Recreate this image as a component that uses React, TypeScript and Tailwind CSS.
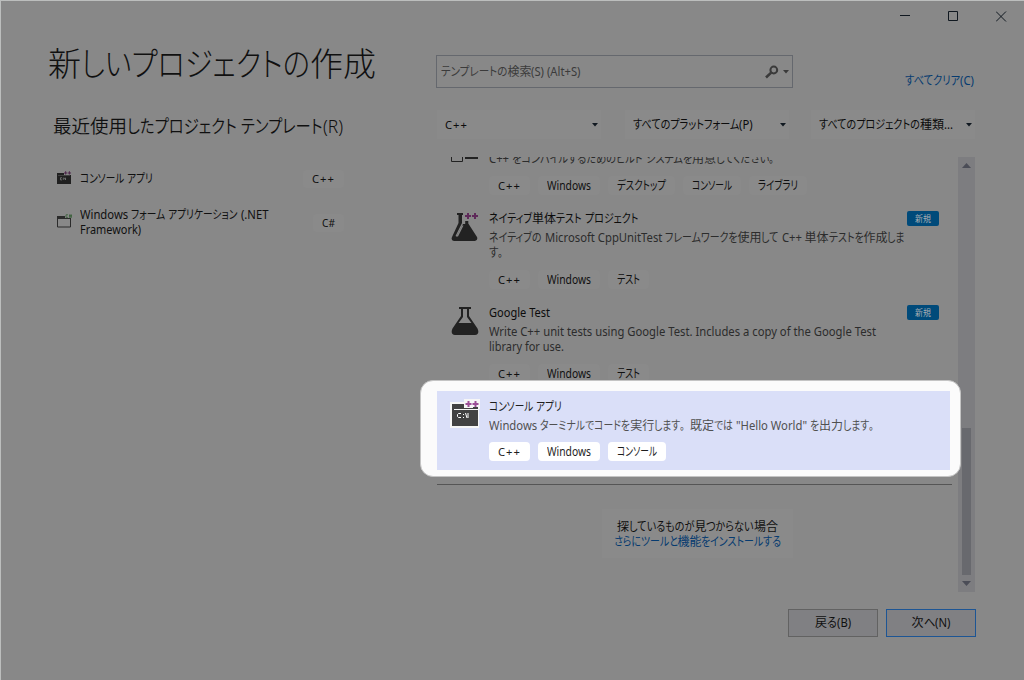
import React, { useLayoutEffect, useRef } from 'react';

const LATIN = 0.94;

type Kind = 'kana' | 'latin' | 'kanji' | 'stop';

const kindOf = (s: string): Kind =>
  s[0] === '。' ? 'stop' : /[\u3003-\u30ff]/.test(s[0]) ? 'kana' : /[\u0020-\u007e]/.test(s[0]) ? 'latin' : 'kanji';

/** One line of text: kana runs are condensed so that the line is `w` pixels wide. */
function Line({ t, w, className = '' }: { t: string; w: number; className?: string }) {
  const ref = useRef<HTMLSpanElement>(null);
  const runs = t.match(/。|[\u3003-\u30ff]+|[\u0020-\u007e]+|[\u3400-\u9fff]+/g) ?? [];
  const hasKana = runs.some((r) => kindOf(r) === 'kana');

  useLayoutEffect(() => {
    const outers = Array.from(ref.current!.children) as HTMLElement[];
    const inners = outers.map((o) => o.firstElementChild as HTMLElement);
    outers.forEach((o) => (o.style.width = 'auto'));
    inners.forEach((i) => (i.style.transform = 'none'));
    const widths = inners.map((i) => i.getBoundingClientRect().width);
    const fixedScale = (k: Kind) => (k === 'latin' ? LATIN : k === 'stop' ? 0.8 : 1);
    let fixed = 0;
    let flexible = 0;
    runs.forEach((r, i) => {
      const k = kindOf(r);
      if (!hasKana || k === 'kana') flexible += widths[i];
      else fixed += widths[i] * fixedScale(k);
    });
    const f = (w - fixed) / flexible;
    runs.forEach((r, i) => {
      const k = kindOf(r);
      const s = !hasKana || k === 'kana' ? f : fixedScale(k);
      outers[i].style.width = `${widths[i] * s}px`;
      inners[i].style.transform = `scaleX(${s})`;
    });
  }, [t, w]);

  return (
    <span ref={ref} className={`block shrink-0 whitespace-pre ${className}`} style={{ width: w }}>
      {runs.map((r, i) => (
        <span key={i} className="inline-block whitespace-pre align-baseline">
          <span className={`inline-block origin-left whitespace-pre ${kindOf(r) === 'stop' ? '[font-feature-settings:normal]' : ''}`}>{r}</span>
        </span>
      ))}
    </span>
  );
}

type Tag = [string, number];

const tagFont = (t: string) => (t === 'C++' ? 'text-[11px] tracking-[1px]' : '');

function Tags({ items, bright = false }: { items: Tag[]; bright?: boolean }) {
  return (
    <div className="flex gap-2">
      {items.map(([t, w]) => (
        <span key={t} className={`flex h-[19px] items-center rounded-[4px] px-[9px] ${bright ? 'bg-white text-[#1e1e1e]' : 'bg-[#8a8a8a] text-[#101010]'}`}>
          <Line t={t} w={w} className={`leading-[19px] ${tagFont(t)}`} />
        </span>
      ))}
    </div>
  );
}

function Caret({ className }: { className: string }) {
  return (
    <svg width="6" height="4" viewBox="0 0 6 4" className={`shrink-0 ${className}`}>
      <path d="M0 0h6L3 3.5z" fill="currentColor" />
    </svg>
  );
}

function Combo({ t, w }: { t: string; w: number }) {
  return (
    <div className="flex h-[29px] w-[164px] items-center justify-between bg-[#8a8a8a] pr-[3px] pl-[8px] text-[#0c0c0c]">
      <Line t={t} w={w} className={`leading-[29px] ${tagFont(t)}`} />
      <Caret className="text-[#101820]" />
    </div>
  );
}

const PLUSES = 'M2 0h2v2h2v2h-2v2h-2v-2h-2v-2h2zM9 0h2v2h2v2h-2v2h-2v-2h-2v-2h2z';

function ConsoleIcon() {
  return (
    <svg width="30" height="29" viewBox="0 0 30 29" className="shrink-0">
      <path d="M0 3h14V0h16v10h-1v19H0z" fill="#f6f6f6" />
      <path d="M2 5h12v3h14v19H2z" fill="#424242" />
      <path d="M4 10h24v1H4z" fill="#f6f6f6" />
      <path d="M14 8h9v1h-9z" fill="#f6f6f6" />
      <path d="M11 14.5H8.5l-1 1v2l1 1H11M13.5 15v1M13.5 18v1M15.500 14l1.500 5M18 14v5" fill="none" stroke="#fff" strokeWidth="1" />
      <path d={PLUSES} transform="translate(15.5 2)" fill="#9b4f96" />
    </svg>
  );
}

function SmallConsoleIcon() {
  return (
    <svg width="15" height="14" viewBox="0 0 15 14" className="shrink-0">
      <path d="M0 2h7v2h7v9H0z" fill="#202020" />
      <path d="M1 4.500h12" stroke="#555" strokeWidth=".6" />
      <path d="M5 6.700H3.500v2.200H5M6.300 6.700v2.200M7.200 6.700l1.300 2.200v-2.200" fill="none" stroke="#888" strokeWidth=".7" />
      <path d={PLUSES} transform="translate(7 .3) scale(.54)" fill="#50294d" />
    </svg>
  );
}

function FormIcon() {
  return (
    <svg width="15" height="14" viewBox="0 0 15 14" className="shrink-0">
      <path d="M.5 4V13h13V4" fill="none" stroke="#2b2b2b" />
      <path d="M0 2h8v3H0zM8 4h6v1H8z" fill="#2b2b2b" />
      <path d="M11 .8H9v2.600h2M12 1.300h3M12 2.900h3M12.800.5v3.200M14.200.5v3.200" fill="none" stroke="#2d5a2d" strokeWidth=".7" />
    </svg>
  );
}

function NativeFlask() {
  return (
    <svg width="28" height="29" viewBox="0 0 28 29" className="shrink-0">
      <path d="M6 1h6v2h-1v8L4.500 24l1 .5L12 12h2.200V9h3.100v2.600L26 25q1.200 3.300-2 4H3q-3.400-.7-2-4L7.500 11V3H6z" fill="#222" />
      <path d="M5.200 24.500L11 13.500h1.500L7 24.500z" fill="#858585" />
      <path d={PLUSES} transform="translate(14 1)" fill="#5f2a5a" />
    </svg>
  );
}

function Flask() {
  return (
    <svg width="28" height="29" viewBox="0 0 28 29" className="shrink-0">
      <path d="M8 1h12v2h-2v7l8.500 12.500Q29 28 24 29H4Q-1 28 1.500 22.500L10 10V3H8zM12 3v8L7.500 17h13L16 11V3z" fill="#222" fillRule="evenodd" />
    </svg>
  );
}

function Template({ icon, title, lines, tags, badge }: { icon: React.ReactNode; title: Tag; lines: Tag[]; tags: Tag[]; badge?: boolean }) {
  return (
    <div className="flex h-[94px] w-[514px] pl-[14px]">
      <div className="w-[38px] shrink-0 pt-[9px]">{icon}</div>
      <div className="flex flex-col">
        <div className="flex h-[26px] w-[450px] items-center justify-between pt-[5px]">
          <Line t={title[0]} w={title[1]} className="leading-[22px] text-[#0c0c0c]" />
          {badge && (
            <span className="flex h-[15px] w-8 items-center justify-center rounded-[2px] bg-[#004a7a] text-[9px] text-[#a6adb2]">
              <Line t="新規" w={16} className="leading-[15px]" />
            </span>
          )}
        </div>
        <div className="h-[41px] pt-[1px] text-[#2c2c2c]">
          {lines.map(([t, w]) => (
            <Line key={t} t={t} w={w} className="h-[15px] leading-[15px]" />
          ))}
        </div>
        <Tags items={tags} />
      </div>
    </div>
  );
}

export default function App() {
  return (
    <div className="flex h-[680px] w-[1024px] flex-col overflow-hidden border-t border-l border-[#bcbebd] bg-[#888888] font-['Noto_Sans','Noto_Sans_CJK_JP',sans-serif] text-[12px] text-[#101010] [font-feature-settings:'palt']">
      <header className="flex h-[30px] shrink-0 items-center justify-end gap-[37px] pr-[17px] text-[#101820]">
        <svg width="11" height="11" viewBox="0 0 11 11"><path d="M0 4.500h10" stroke="currentColor" /></svg>
        <svg width="11" height="11" viewBox="0 0 11 11"><path d="M.5.5h9v9h-9z" fill="none" stroke="currentColor" /></svg>
        <svg width="11" height="11" viewBox="0 0 11 11"><path d="M0 .5l10 10M10 .5l-10 10" stroke="currentColor" /></svg>
      </header>

      <div className="flex h-[649px]">
        <aside className="w-[435px] shrink-0 pl-[47px]">
          <h1 className="pt-[9px] text-[33px] font-light">
            <Line t="新しいプロジェクトの作成" w={328} className="leading-[48px]" />
          </h1>
          <h2 className="pt-[23px] pl-[5px] text-[18.5px] font-[350]">
            <Line t="最近使用したプロジェクト テンプレート(R)" w={290} className="leading-[30px]" />
          </h2>
          <div className="mt-[28px] flex h-[20px] w-[296px] items-center pl-[9px]">
            <div className="-mt-[2px]"><SmallConsoleIcon /></div>
            <Line t="コンソール アプリ" w={73} className="ml-2 leading-5" />
            <span className="ml-auto flex h-[18px] items-center rounded-[3px] bg-[#8a8a8a] px-[9px]">
              <Line t="C++" w={23} className="text-[11px] leading-[18px] tracking-[1px]" />
            </span>
          </div>
          <div className="mt-[17px] flex h-[31px] w-[296px] items-center pl-[9px]">
            <div className="-mt-[2px]"><FormIcon /></div>
            <div className="ml-2">
              <Line t="Windows フォーム アプリケーション (.NET" w={188} className="h-[15px] leading-[15px]" />
              <Line t="Framework)" w={61} className="h-[15px] leading-[15px]" />
            </div>
            <span className="mt-[2px] ml-auto flex h-[18px] items-center rounded-[3px] bg-[#8a8a8a] px-[9px]">
              <Line t="C#" w={13} className="text-[11px] leading-[18px]" />
            </span>
          </div>
        </aside>

        <main className="w-[540px] shrink-0">
          <div className="mt-[24px] flex h-[33px]">
            <div className="flex h-[33px] w-[357px] items-center border border-[#65686e] pr-[3px] pl-[4px] text-[#3b3b3b]">
              <Line t="テンプレートの検索(S) (Alt+S)" w={140} className="leading-[31px]" />
              <svg width="14" height="14" viewBox="0 0 14 14" className="ml-auto">
                <circle cx="8.8" cy="5" r="3.4" fill="none" stroke="#3a3a3a" strokeWidth="2" />
                <path d="M6.2 7.6L1 12.5" stroke="#3a3a3a" strokeWidth="2.6" />
              </svg>
              <Caret className="ml-[4px] text-[#3a3a3a]" />
            </div>
            <Line t="すべてクリア(C)" w={69} className="mt-[15px] ml-[112px] leading-[22px] text-[#063b70]" />
          </div>
          <div className="mt-[22px] flex gap-[23px] pl-px">
            <Combo t="C++" w={23} />
            <div className="-mr-px pl-px"><Combo t="すべてのプラットフォーム(P)" w={120} /></div>
            <Combo t="すべてのプロジェクトの種類..." w={134} />
          </div>

          <div className="mt-[18px] flex h-[435px] pl-px">
            <section className="w-[521px]">
              <div className="h-[19px] overflow-hidden pl-[14px]">
                <div className="flex h-[8px] overflow-hidden">
                  <svg width="28" height="8" viewBox="0 0 28 8" className="shrink-0">
                    <path d="M.5 0v4.500h11V0" fill="none" stroke="#222" />
                    <path d="M14 0h13v2H14z" fill="#222" />
                  </svg>
                  <Line t="C++ をコンパイルするためのビルド システムを用意してください。" w={290} className="-mt-[6px] ml-[10px] h-[15px] leading-[15px] text-[#2c2c2c]" />
                </div>
              </div>
              <div className="h-[27px] pl-[52px]">
                <Tags items={[['C++', 23], ['Windows', 44], ['デスクトップ', 49], ['コンソール', 40], ['ライブラリ', 40]]} />
              </div>
              <Template
                icon={<NativeFlask />}
                title={['ネイティブ単体テスト プロジェクト', 149]}
                lines={[['ネイティブの Microsoft CppUnitTest フレームワークを使用して C++ 単体テストを作成しま', 416], ['す。', 19]]}
                tags={[['C++', 23], ['Windows', 44], ['テスト', 23]]}
                badge
              />
              <Template
                icon={<Flask />}
                title={['Google Test', 61]}
                lines={[['Write C++ unit tests using Google Test. Includes a copy of the Google Test', 387], ['library for use.', 75]]}
                tags={[['C++', 23], ['Windows', 44], ['テスト', 23]]}
                badge
              />
              <div className="relative z-10 h-[79px] w-[513px]">
                <div className="absolute -top-[11px] -left-[17px] h-[97px] w-[541px] rounded-[13px] border border-[#c4c4c4] bg-[#fbfbfb]" />
                <div className="relative flex h-[79px] bg-[#dadff8] pl-[13px]">
                  <div className="w-[39px] shrink-0 pt-[8px]"><ConsoleIcon /></div>
                  <div>
                    <Line t="コンソール アプリ" w={73} className="mt-[5px] h-[20px] leading-[22px] text-[#1e1e1e]" />
                    <Line t={'Windows ターミナルでコードを実行します。既定では "Hello World" を出力します。'} w={390} className="h-[26px] leading-[20px] text-[#505050]" />
                    <Tags bright items={[['C++', 23], ['Windows', 44], ['コンソール', 40]]} />
                  </div>
                </div>
              </div>
              <div className="mt-[14px] h-px w-[515px] bg-[#555555]" />
              <div className="mt-[24px] ml-[165px] flex h-[49px] w-[191px] flex-col items-center justify-center bg-[#8a8a8a]">
                <Line t="探しているものが見つからない場合" w={161} className="h-[15px] leading-[15px]" />
                <Line t="さらにツールと機能をインストールする" w={168} className="h-[15px] leading-[15px] text-[#063b70]" />
              </div>
            </section>
            <div className="flex w-[17px] flex-col items-center bg-[#7d7d80] text-[#4b4d57]">
              <svg width="9" height="17" viewBox="0 0 9 17"><path d="M0 11h9L4.500 6z" fill="currentColor" /></svg>
              <div className="mt-[254px] h-[147px] w-[9px] bg-[#68696e]" />
              <svg width="9" height="17" viewBox="0 0 9 17"><path d="M0 6h9L4.500 11z" fill="currentColor" /></svg>
            </div>
          </div>

          <div className="mt-[17px] flex justify-end gap-2">
            <button className="flex h-[28px] w-[90px] items-center justify-center border border-[#626262] bg-[#808083]">
              <Line t="戻る(B)" w={36} className="leading-[26px]" />
            </button>
            <button className="flex h-[28px] w-[90px] items-center justify-center border border-[#1d5594] bg-[#808083]">
              <Line t="次へ(N)" w={39} className="leading-[26px]" />
            </button>
          </div>
        </main>
      </div>
    </div>
  );
}
